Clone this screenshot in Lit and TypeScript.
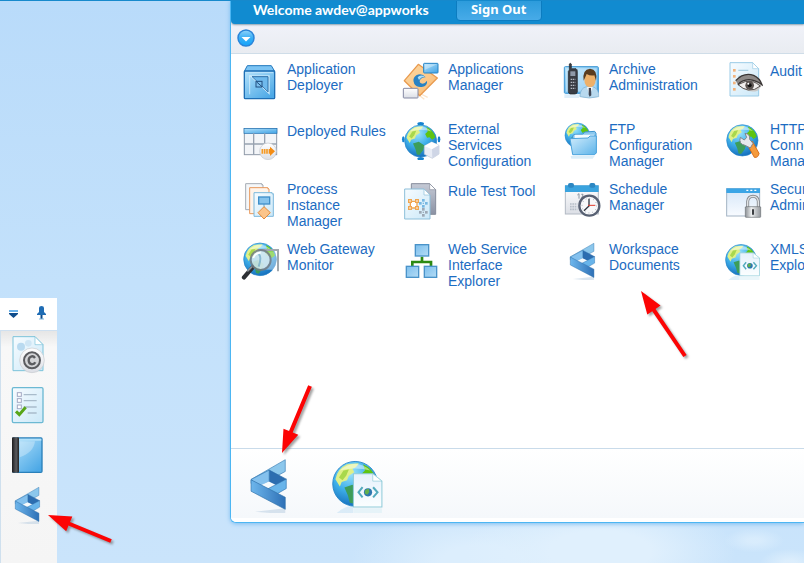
import { LitElement, html, svg, css } from "lit";
import { customElement } from "lit/decorators.js";

const globe = (cx: number, cy: number, r: number) => svg`
  <g transform="translate(${cx} ${cy}) scale(${r / 50})">
    <circle r="50" fill="url(#sea)" stroke="#2585c8" stroke-width="2"/>
    <path d="M-44-10Q-40-34-18-44L8-46Q4-36-6-34L-2-26L-14-18L-18-8L-30-4L-34 6Z" fill="#dff08a"/>
    <path d="M-36-14L-26-30L-14-32L-20-18L-28-8Z" fill="#a9d84c"/>
    <path d="M18-44Q40-34 46-12L36-4L28-12L20-10L14-22L22-30Z" fill="#5fc412"/>
    <path d="M-24 8L-6 2L12 14L8 28L-4 44L-12 42L-16 26Z" fill="#3d9d5a"/>
    <path d="M-34-30Q0-60 34-30Q0-38-34-30Z" fill="#fff" opacity=".45"/>
  </g>`;

const page = (x: number, y: number, w: number, h: number, fill: string, stroke: string, fold = 18) => svg`
  <path d="M${x} ${y}H${x + w - fold}L${x + w} ${y + fold}V${y + h}H${x}Z" fill=${fill} stroke=${stroke} stroke-width="3"/>
  <path d="M${x + w - fold} ${y}V${y + fold}H${x + w}Z" fill="#fff" stroke=${stroke} stroke-width="2"/>`;

const star = (x: number, y: number, c: string) => svg`
  <g fill=${c}><rect x=${x - 4} y=${y - 13} width="8" height="8"/><rect x=${x - 4} y=${y + 5} width="8" height="8"/>
  <rect x=${x - 13} y=${y - 4} width="8" height="8"/><rect x=${x + 5} y=${y - 4} width="8" height="8"/><rect x=${x - 2} y=${y - 2} width="4" height="4"/></g>`;

const art: Record<string, { box?: string; draw: unknown }> = {
  deployer: { draw: svg`
    <path d="M22 17H94L104 34H13Z" fill="#7cc4f4" stroke="#2178bd" stroke-width="3"/>
    <rect x="13" y="33" width="91" height="83" rx="3" fill="url(#blue)" stroke="#1f6fb5" stroke-width="4"/>
    <path d="M18 38H99" stroke="#bfe4fb" stroke-width="3"/>
    <path d="M29 46H89V103Z" fill="#c4e7fb"/>
    <path d="M36 50H84V96Z" fill="#6fb9ec" stroke="#2b6ea8" stroke-width="3"/>
    <path d="M29 46V103M29 46L89 103" stroke="#eaf7ff" stroke-width="2"/>
    <rect x="48" y="64" width="18" height="17" fill="#7cc0ee" stroke="#204f80" stroke-width="3"/>
    <path d="M50 66L66 80" stroke="#204f80" stroke-width="3"/>` },
  appmanager: { draw: svg`
    <path d="M46 100L70 118M60 102L80 112" stroke="#f7d3a8" stroke-width="4" opacity=".6"/>
    <path d="M52 13L109 54L56 107L10 62Z" fill="url(#orange)" stroke="#e99a4e" stroke-width="4" stroke-linejoin="round"/>
    <path d="M74 52Q62 38 46 46Q32 56 40 72Q48 84 66 80Q80 76 78 62Q70 74 60 70Q52 64 60 56Q66 50 74 52Z" fill="#2882c4"/>
    <path d="M50 52Q58 42 72 50Q60 50 54 60Z" fill="#a9dcf7"/>
    <rect x="68" y="10" width="43" height="29" rx="2" fill="url(#blue)" stroke="#2583c4" stroke-width="3"/>
    <path d="M71 13H108L71 30Z" fill="#fff" opacity=".35"/>
    <rect x="7" y="85" width="44" height="29" rx="2" fill="url(#silver)" stroke="#8589a3" stroke-width="3"/>` },
  rules: { draw: svg`
    <rect x="13" y="26" width="97" height="78" fill="#f3f5f8" stroke="#8f9aa8" stroke-width="3"/>
    <rect x="12" y="25" width="99" height="15" fill="url(#blue)" stroke="#1d6cae" stroke-width="2"/>
    <path d="M41 40V104M74 40V104M12 72H110" stroke="#98a2b0" stroke-width="4"/>
    <circle cx="84" cy="94" r="25" fill="url(#silver)" stroke="#c4c8ce" stroke-width="2"/>
    <path d="M67 87V101M74 87V101M81 87V101" stroke="#f59a25" stroke-width="5"/>
    <path d="M86 87H90V80L105 94L90 108V101H86Z" fill="#f48d15"/>` },
  external: { draw: svg`
    <g fill="#1683d0"><ellipse cx="59" cy="11" rx="10" ry="5"/><ellipse cx="59" cy="116" rx="10" ry="5"/><ellipse cx="7" cy="58" rx="4" ry="9"/><ellipse cx="114" cy="58" rx="4" ry="9"/></g>
    ${globe(59, 63, 48)}
    <path d="M92 66L114 76V102L94 115L70 103V78Z" fill="#e9edf6" stroke="#c0c8d8" stroke-width="2"/>
    <path d="M70 78L93 88L114 76L92 66Z" fill="#fff"/><path d="M93 88L114 76V102L94 115Z" fill="#cfd6e6"/>` },
  archive: { draw: svg`
    <rect x="7" y="20" width="102" height="80" rx="3" fill="url(#blue)" stroke="#3c96d4" stroke-width="3"/>
    <rect x="12" y="25" width="92" height="70" fill="#d4edfb" opacity=".6"/>
    <path d="M7 103H60L50 114H7Z" fill="#c9e3f5" opacity=".6"/>
    <path d="M22 30V12Q25 8 28 12V26H42Q46 28 46 34V96Q45 102 38 102H24Q19 100 19 94V34Z" fill="#3a3d44" stroke="#1f2126" stroke-width="2"/>
    <rect x="25" y="34" width="15" height="14" fill="#8f99a8"/>
    <path d="M26 58H40M26 67H40M26 76H40M26 85H40" stroke="#b5bac2" stroke-width="4" stroke-dasharray="4 2"/>
    <path d="M54 110Q54 84 74 80H92Q112 86 110 110Q82 118 54 110Z" fill="#b8d9ee" stroke="#7fb0d0" stroke-width="2"/>
    <path d="M75 82L83 106L92 82Z" fill="#fff"/><path d="M80 84H87L88 106L83 110L80 104Z" fill="#3f4654"/>
    <ellipse cx="84" cy="60" rx="17" ry="22" fill="#eeb068"/>
    <path d="M65 62Q60 28 84 26Q108 28 102 62L97 46Q84 48 74 42Q69 54 65 62Z" fill="#5a3c1e"/>` },
  audit: { draw: svg`
    ${page(21, 8, 86, 100, "url(#paper)", "#9acbe6")}
    <g fill="#f2b47e"><rect x="30" y="27" width="8" height="8"/><rect x="30" y="45" width="8" height="8"/><rect x="30" y="65" width="8" height="8"/><rect x="30" y="84" width="8" height="8"/></g>
    <path d="M46 31H76M46 49H60" stroke="#a9cfe2" stroke-width="4"/>
    <path d="M43 72Q64 46 92 52Q108 58 117 76L104 92Q74 102 43 72Z" fill="#c9c7c5"/>
    <path d="M45 74Q68 60 88 64Q100 68 112 78Q96 92 76 90Q60 88 45 74Z" fill="#f1efee" stroke="#55504e" stroke-width="3"/>
    <path d="M38 62Q62 36 92 46Q110 54 117 74Q98 60 78 59Q56 60 45 74" fill="#8d8987" stroke="#3a3635" stroke-width="4"/>
    <circle cx="80" cy="76" r="13" fill="#5c5552"/><circle cx="80" cy="76" r="6" fill="#111"/><circle cx="76" cy="71" r="3" fill="#fff"/>` },
  ftp: { draw: svg`
    ${globe(46, 46, 37)}
    <path d="M32 48Q34 42 42 43L62 43L68 36L98 34L102 40V100H32Z" fill="#8cc9ef" stroke="#3f95cf" stroke-width="3"/>
    <path d="M38 44H96V60H38Z" fill="#f4fbff"/>
    <path d="M24 56L78 54L84 48H103V98L98 104H32Z" fill="url(#folder)" stroke="#4da4dd" stroke-width="3"/>
    <path d="M26 108H98L92 116H28Z" fill="#c5e2f5" opacity=".6"/>` },
  http: { draw: svg`
    ${globe(58, 61, 47)}
    <path d="M72 72L88 64L108 100Q106 114 94 112Z" fill="#f59a3c" stroke="#d9701c" stroke-width="3"/>
    <path d="M52 52Q46 72 66 76L82 84L90 70L80 58Q82 42 66 40L71 52L64 60Z" fill="#e6e8ec" stroke="#80868e" stroke-width="3"/>` },
  process: { draw: svg`
    ${page(17, 11, 52, 78, "#f5f7f9", "#a5abb4", 4)}
    ${page(29, 23, 58, 78, "#fff4ea", "#e8985c", 4)}
    ${page(42, 38, 58, 71, "url(#paper)", "#7db9dc", 4)}
    <path d="M72 72V88" stroke="#6aa5cc" stroke-width="3"/>
    <rect x="56" y="51" width="33" height="21" fill="#86c3ec" stroke="#3f8fc9" stroke-width="4"/>
    <path d="M72 80L91 98L72 117L54 98Z" fill="#fbc48a" stroke="#e38b3c" stroke-width="3"/>` },
  ruletest: { draw: svg`
    ${page(31, 11, 73, 92, "url(#slate)", "#868d9c")}
    ${page(11, 27, 76, 90, "url(#paper)", "#8dbfda")}
    <g fill="#fff" stroke="#f0a650" stroke-width="4"><path d="M28 64H48V84H28Z"/><rect x="23" y="59" width="8" height="8"/><rect x="44" y="59" width="8" height="8"/><rect x="23" y="80" width="8" height="8"/><rect x="44" y="80" width="8" height="8"/></g>
    ${star(67, 70, "#78b8e2")}${star(67, 97, "#9da9b6")}` },
  schedule: { draw: svg`
    <rect x="10" y="18" width="99" height="84" fill="url(#silver)" stroke="#b3bac4" stroke-width="3"/>
    <path d="M9 16H110V36H9Z" fill="#3aa3de"/>
    <g fill="#2d87c2"><rect x="18" y="9" width="18" height="14" rx="6"/><rect x="82" y="9" width="18" height="14" rx="6"/></g>
    <path d="M46 45L51 41V56M58 43Q66 40 62 48L57 56H65" fill="none" stroke="#8993a0" stroke-width="3"/>
    <path d="M24 72H46M24 80H46M24 88H46" stroke="#b6bec8" stroke-width="5" stroke-dasharray="5 2"/>
    <circle cx="82" cy="77" r="30" fill="#f7f8fa" stroke="#586173" stroke-width="7"/>
    <circle cx="82" cy="77" r="22" fill="none" stroke="#87909e" stroke-width="3" stroke-dasharray="2 9.5"/>
    <path d="M81 56V78L66 92" fill="none" stroke="#2f3642" stroke-width="4"/><path d="M78 76H100" stroke="#e03a2c" stroke-width="3"/>` },
  security: { draw: svg`
    <rect x="11" y="26" width="99" height="82" fill="url(#window)" stroke="#a3b3c4" stroke-width="3"/>
    <rect x="10" y="25" width="101" height="14" fill="#3ba5e6"/><path d="M70 31H76M82 31H88M94 31H100" stroke="#fff" stroke-width="4"/>
    <path d="M74 82V64Q76 49 90 49Q104 49 106 64V82" fill="none" stroke="#85898e" stroke-width="9"/>
    <path d="M74 82V64Q76 49 90 49Q104 49 106 64V82" fill="none" stroke="#e0e2e4" stroke-width="4"/>
    <rect x="67" y="80" width="46" height="32" rx="2" fill="url(#metal)" stroke="#6d7176" stroke-width="2"/>
    <path d="M87 88H93V104H87Z" fill="#3b3e42"/>` },
  gateway: { draw: svg`
    ${globe(60, 58, 49)}
    <path d="M53 30H114V94" fill="none" stroke="#a1a8ae" stroke-width="6"/><path d="M56 34H110V90L56 88Z" fill="#fff" opacity=".4"/>
    <path d="M38 82L12 112" stroke="#2d3034" stroke-width="13" stroke-linecap="round"/><path d="M36 80L22 94" stroke="#8d949b" stroke-width="5"/>
    <circle cx="62" cy="60" r="30" fill="#d5e9ef" opacity=".85" stroke="#737c84" stroke-width="6"/>
    <path d="M56 42Q66 50 56 80" fill="none" stroke="#5e9fc0" stroke-width="6" opacity=".6"/>
    <path d="M40 54Q46 38 62 38" fill="none" stroke="#fff" stroke-width="5"/>` },
  webservice: { draw: svg`
    <path d="M63 50V66M34 82V66H90V82" fill="none" stroke="#2c8a12" stroke-width="8"/>
    <g fill="url(#tile)" stroke="#4a93c9" stroke-width="4"><rect x="43" y="14" width="40" height="34"/><rect x="16" y="79" width="37" height="33"/><rect x="70" y="79" width="37" height="33"/></g>` },
  workspace: { box: "42 255 173 173", draw: svg`
    <path d="M90 424L180 414V432Z" fill="#b5cce0" opacity=".5"/>
    <path d="M78 328L180 269V304L140 326L78 340Z" fill="#8cc7ec" stroke="#3c7fb5" stroke-width="2"/>
    <path d="M132 300L183 327L150 346L132 336Z" fill="#2c6db0" stroke="#2465a5" stroke-width="2"/>
    <path d="M78 328L132 300V334L104 350Z" fill="#84c1ee" stroke="#3679b3" stroke-width="2"/>
    <path d="M104 347L131 334L154 345L130 358Z" fill="#f5fafd"/>
    <path d="M183 327V355L150 374L124 358Z" fill="#68b4ea" stroke="#3275b3" stroke-width="2"/>
    <path d="M78 329L180 381V417L78 363Z" fill="url(#ribbon)" stroke="#2e70aa" stroke-width="2"/>` },
  xml: { box: "311 255 171 171", draw: svg`
    <path d="M330 430Q350 408 382 404V434Z" fill="#a8d5f0" opacity=".35"/>
    <path d="M383 412H467V430H383Z" fill="#d5edf5" opacity=".5"/>
    ${globe(388, 340, 66)}
    <path d="M383 310H440L467 332V408H383Z" fill="url(#sheet)" stroke="#8fcbd9" stroke-width="3"/>
    <path d="M440 310V332H467Z" fill="#fff" stroke="#8fcbd9" stroke-width="2"/>
    <path d="M410 350L398 365L410 380M441 350L454 365L441 380" fill="none" stroke="#52aabd" stroke-width="6"/>
    <circle cx="426" cy="365" r="12" fill="#2c77ae"/><path d="M418 358L428 354L430 364L424 372L416 368Z" fill="#62b04c"/>` },
  copyright: { draw: svg`
    ${page(18, 8, 90, 102, "url(#paper)", "#7cc3da", 24)}
    <circle cx="42" cy="38" r="12" fill="#b9daf0"/><circle cx="64" cy="28" r="10" fill="#cfe6f5"/>
    <circle cx="75" cy="79" r="37" fill="url(#silver)" stroke="#c7cacf" stroke-width="2"/>
    <circle cx="75" cy="79" r="24" fill="#d4d5d8" stroke="#5b5c60" stroke-width="6"/>
    <path d="M84 72Q80 66 74 67Q65 69 65 79Q65 90 75 91Q82 91 85 85" fill="none" stroke="#5b5c60" stroke-width="7"/>` },
  list: { draw: svg`
    <rect x="16" y="11" width="92" height="105" rx="4" fill="url(#paper)" stroke="#6cb9d3" stroke-width="4"/>
    <g fill="#fff" stroke="#a3a9c4" stroke-width="3"><rect x="31" y="26" width="12" height="11"/><rect x="31" y="44" width="12" height="11"/><rect x="31" y="63" width="12" height="11"/></g>
    <path d="M50 32H89M50 50H89M50 69H89M62 87H89" stroke="#a9bccb" stroke-width="4"/>
    <path d="M27 82L37 92L56 70" fill="none" stroke="#58a618" stroke-width="9"/>` },
  book: { draw: svg`
    <rect x="17" y="12" width="88" height="103" rx="3" fill="url(#blue)" stroke="#2a80ba" stroke-width="4"/>
    <path d="M36 14H103V20H36Z" fill="#b4e2fa"/><path d="M38 22H84Q80 56 38 70Z" fill="#fff" opacity=".3"/>
    <rect x="15" y="10" width="21" height="106" rx="3" fill="url(#spine)"/>` },
};

const defs = svg`<defs>
  <radialGradient id="sea" cx=".4" cy=".25" r=".8"><stop offset="0" stop-color="#9fe4fb"/><stop offset=".5" stop-color="#3fb0ea"/><stop offset="1" stop-color="#1168b8"/></radialGradient>
  <linearGradient id="blue" x2=".8" y2="1"><stop offset="0" stop-color="#b4e2fb"/><stop offset="1" stop-color="#4ba8e6"/></linearGradient>
  <linearGradient id="orange" x2="1" y2="1"><stop offset="0" stop-color="#fbd9a4"/><stop offset="1" stop-color="#fbbb74"/></linearGradient>
  <linearGradient id="silver" x2="0" y2="1"><stop offset="0" stop-color="#ffffff"/><stop offset="1" stop-color="#dcdfe6"/></linearGradient>
  <linearGradient id="paper" x2="1" y2="1"><stop offset="0" stop-color="#f7fcff"/><stop offset="1" stop-color="#cbe8f8"/></linearGradient>
  <linearGradient id="sheet" x2="0" y2="1"><stop offset="0" stop-color="#e6f1fc"/><stop offset="1" stop-color="#fbfeff"/></linearGradient>
  <linearGradient id="folder" x2="1" y2="1"><stop offset="0" stop-color="#d3edfc"/><stop offset="1" stop-color="#5db4ea"/></linearGradient>
  <linearGradient id="slate" x2="0" y2="1"><stop offset="0" stop-color="#c5cad6"/><stop offset="1" stop-color="#8b92a4"/></linearGradient>
  <linearGradient id="window" x2="0" y2="1"><stop offset="0" stop-color="#d5e6f8"/><stop offset="1" stop-color="#f8fbff"/></linearGradient>
  <linearGradient id="metal"><stop offset="0" stop-color="#8d9196"/><stop offset=".4" stop-color="#eceeef"/><stop offset="1" stop-color="#94989d"/></linearGradient>
  <linearGradient id="tile" x2="1" y2="1"><stop offset="0" stop-color="#7cbfee"/><stop offset="1" stop-color="#b5dcf5"/></linearGradient>
  <linearGradient id="ribbon"><stop offset="0" stop-color="#6db6ec"/><stop offset="1" stop-color="#2e70b6"/></linearGradient>
  <linearGradient id="spine"><stop offset="0" stop-color="#1c1c1e"/><stop offset=".6" stop-color="#5a5a5e"/><stop offset="1" stop-color="#222"/></linearGradient>
</defs>`;

const icon = (name: string) => html`<svg class="icon" viewBox=${art[name].box ?? "0 0 120 120"} aria-hidden="true">${defs}${art[name].draw}</svg>`;

const apps: [string, string][] = [
  ["deployer", "Application Deployer"], ["appmanager", "Applications Manager"], ["archive", "Archive Administration"], ["audit", "Audit"],
  ["rules", "Deployed Rules"], ["external", "External Services Configuration"], ["ftp", "FTP Configuration Manager"], ["http", "HTTP Connector Manager"],
  ["process", "Process Instance Manager"], ["ruletest", "Rule Test Tool"], ["schedule", "Schedule Manager"], ["security", "Security Administration"],
  ["gateway", "Web Gateway Monitor"], ["webservice", "Web Service Interface Explorer"], ["workspace", "Workspace Documents"], ["xml", "XMLStore Explorer"],
];

const pinned: [string, string][] = [["copyright", "License"], ["list", "Tasks"], ["book", "Notebook"], ["workspace", "Workspace Documents"]];

const arrows = [
  { tip: [641, 291], tail: [685, 356] },
  { tip: [282, 453], tail: [310, 386] },
  { tip: [48, 515], tail: [111, 541] },
];

const arrow = ({ tip: [x, y], tail: [tx, ty] }: { tip: number[]; tail: number[] }) => {
  const length = Math.hypot(tx - x, ty - y);
  const angle = (Math.atan2(ty - y, tx - x) * 180) / Math.PI;
  return svg`<path transform="translate(${x} ${y}) rotate(${angle})" d="M0 0L23-8V-2H${length}V2H23V8Z"/>`;
};

@customElement("app-root")
export class AppRoot extends LitElement {
  static styles = css`
    :host { display: block; font-family: "Liberation Sans", Arial, sans-serif; font-size: 14px; line-height: 16px; }
    * { box-sizing: border-box; }
    a { color: #1c6cc2; text-decoration: none; }
    button { font: inherit; padding: 0; cursor: pointer; }
    .desktop {
      position: relative; display: flex; min-height: 100vh; overflow: hidden; border-top: 1px solid #1689cc;
      background:
        radial-gradient(ellipse 170px 70px at 600px 98%, #e0f0fd 30%, #e0f0fd00 80%),
        radial-gradient(ellipse 130px 60px at 480px 100%, #dceefd 30%, #dceefd00 100%),
        radial-gradient(ellipse 30px 12px at 754px 96%, #dceefdd0 20%, #dceefd00 100%),
        radial-gradient(ellipse 30px 14px at 790px 100%, #e0f0fdd0 20%, #e0f0fd00 100%),
        linear-gradient(#b9dbfa, #c3e1fb 50%, #cae4fb);
    }
    .side { flex: none; width: 230px; display: flex; align-items: flex-end; }
    .dock { width: 57px; background: #f5f5f5; }
    .dock-head { height: 33px; display: flex; align-items: center; gap: 12px; padding: 0 5px 3px; background: #fff; border-bottom: 1px solid #cfe0f0; }
    .plain { display: flex; border: 0; background: none; }
    .glyph { display: block; width: 16px; height: 16px; }
    .dock-list { display: flex; flex-direction: column; gap: 10px; padding: 3px 6px 39px; border-left: 1px solid #cfe0ee; background: linear-gradient(#e6e6e6, #f8f8f8 16px, #f5f5f5); }
    .icon { display: block; width: 40px; height: 40px; flex: none; }
    .dock-list a { display: block; }
    .panel {
      flex: 1; min-width: 0; display: flex; flex-direction: column; margin: -1px 0 40px; overflow: hidden;
      background: #fff; border: solid #4cb6f3; border-width: 0 0 1px 1px; border-radius: 0 0 0 6px; box-shadow: 0 1px 4px #7dbdf0;
    }
    .banner { height: 24px; display: flex; align-items: center; gap: 27px; padding: 0 22px 4px; background: #118bd0; color: #fff; border-radius: 0 0 0 4px; box-shadow: 0 1px 2px #8aa0b0; z-index: 1; }
    .welcome { font: bold 14px/20px Lato, sans-serif; }
    .signout { width: 86px; height: 24px; margin-top: -2px; border: 1px solid #0c7cc0; border-radius: 4px; background: linear-gradient(#2899da, #47abe8); color: #fff; font: bold 13px/20px "Noto Sans", sans-serif; }
    .toolbar { height: 30px; display: flex; align-items: center; padding: 0 6px 2px; background: linear-gradient(#f0f2f9, #e9ecf1); border-bottom: 1px solid #cfdde8; }
    .round { width: 18px; height: 18px; }
    .apps { flex: 1; display: grid; grid-template-columns: repeat(4, 161px); grid-auto-rows: 60px; padding: 6px 9px; }
    .app { display: flex; gap: 7px; align-items: flex-start; }
    .name { width: 100px; min-height: 20px; margin-top: 1px; display: flex; align-items: center; }
    .shelf { display: flex; gap: 32px; height: 74px; padding: 6px 8px; border-top: 1px solid #c9dbea; border-bottom: 4px solid #fff; background: linear-gradient(#fff, #f5f8fb); }
    .shelf .icon { width: 58px; height: 58px; }
    .marks { position: absolute; inset: -1px 0 0; width: 100%; height: calc(100% + 1px); pointer-events: none; fill: #fc0404; filter: drop-shadow(2px 2px 1px #6669); }
  `;

  render() {
    return html`
      <div class="desktop">
        <aside class="side">
          <nav class="dock">
            <div class="dock-head">
              <button class="plain" aria-label="Menu"><svg class="glyph" viewBox="0 0 16 16"><path d="M4 6H13" stroke="#6cb3ea" stroke-width="2"/><path d="M4 8H13V9L8.500 13L4 9Z" fill="#0d4c8c"/></svg></button>
              <button class="plain" aria-label="Pin"><svg class="glyph" viewBox="0 0 16 16"><path d="M6 3Q6 1 8.500 1Q11 1 11 3V7L13 9V10H4V9L6 7Z" fill="#1f6cb4"/><path d="M8.500 10V14" stroke="#0d4c8c" stroke-width="2"/><path d="M6 14H11" stroke="#7fb8e0"/></svg></button>
            </div>
            <div class="dock-list">${pinned.map(([i, label]) => html`<a href="#" aria-label=${label}>${icon(i)}</a>`)}</div>
          </nav>
        </aside>
        <main class="panel">
          <header class="banner">
            <span class="welcome">Welcome awdev@appworks</span>
            <button class="signout">Sign Out</button>
          </header>
          <div class="toolbar">
            <button class="plain" aria-label="Expand"><svg class="round" viewBox="0 0 18 18">
              <defs><linearGradient id="orb" x2="0" y2="1"><stop offset="0" stop-color="#8fd4fb"/><stop offset=".5" stop-color="#38aef5"/><stop offset="1" stop-color="#12a4fb"/></linearGradient></defs>
              <circle cx="9" cy="9" r="8" fill="url(#orb)" stroke="#2a84d8" stroke-width="1.500"/><path d="M4.500 8H13.500L9 12.500Z" fill="#fff"/></svg></button>
          </div>
          <nav class="apps">${apps.map(([i, name]) => html`<a class="app" href="#">${icon(i)}<span class="name">${name}</span></a>`)}</nav>
          <footer class="shelf">
            <a href="#" aria-label="Workspace Documents">${icon("workspace")}</a>
            <a href="#" aria-label="XMLStore Explorer">${icon("xml")}</a>
          </footer>
        </main>
        <svg class="marks" aria-hidden="true">${arrows.map(arrow)}</svg>
      </div>`;
  }
}
